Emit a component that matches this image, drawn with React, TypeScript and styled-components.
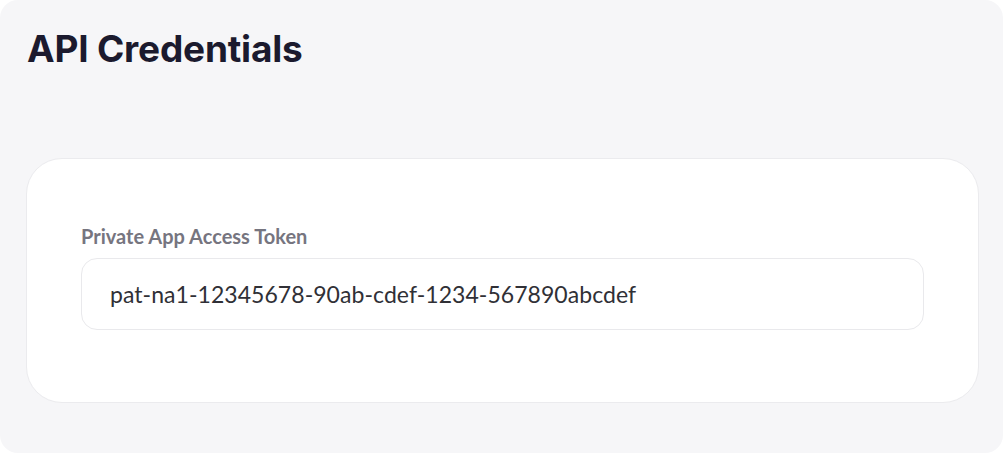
import React from "react";
import styled, { createGlobalStyle } from "styled-components";

const Global = createGlobalStyle`
  html, body { margin: 0; padding: 0; background: #ffffff; }
  body { font-family: Lato, "Noto Sans", sans-serif; }
`;

const Panel = styled.section`
  box-sizing: border-box;
  width: 1003px;
  height: 453px;
  background: #f6f6f8;
  border-radius: 18px;
  padding: 27px 24px 0 26px;
  display: flex;
  flex-direction: column;
`;

const Title = styled.h1`
  margin: 0 0 0 1px;
  font-family: Inter, "Noto Sans", sans-serif;
  font-weight: 700;
  font-size: 37px;
  line-height: 44px;
  color: #1b1a2e;
  letter-spacing: -0.2px;
`;

const Card = styled.div`
  box-sizing: border-box;
  margin-top: 87px;
  height: 245px;
  background: #ffffff;
  border: 1px solid #ebebee;
  border-radius: 36px;
  padding: 65px 54px 0 54px;
  display: flex;
  flex-direction: column;
  gap: 10px;
`;

const Label = styled.label`
  font-family: Lato, sans-serif;
  font-weight: 700;
  font-size: 20px;
  line-height: 24px;
  color: #76757f;
`;

const Field = styled.div`
  box-sizing: border-box;
  height: 72px;
  border: 1px solid #e9e9ec;
  border-radius: 16px;
  background: #ffffff;
  display: flex;
  align-items: center;
  padding: 0 28px;
  font-family: Lato, sans-serif;
  font-size: 23px;
  letter-spacing: 0.05px;
  color: #303036;
`;

export default function App() {
  return (
    <>
      <Global />
      <Panel>
        <Title>API Credentials</Title>
        <Card>
          <Label>Private App Access Token</Label>
          <Field>pat-na1-12345678-90ab-cdef-1234-567890abcdef</Field>
        </Card>
      </Panel>
    </>
  );
}
